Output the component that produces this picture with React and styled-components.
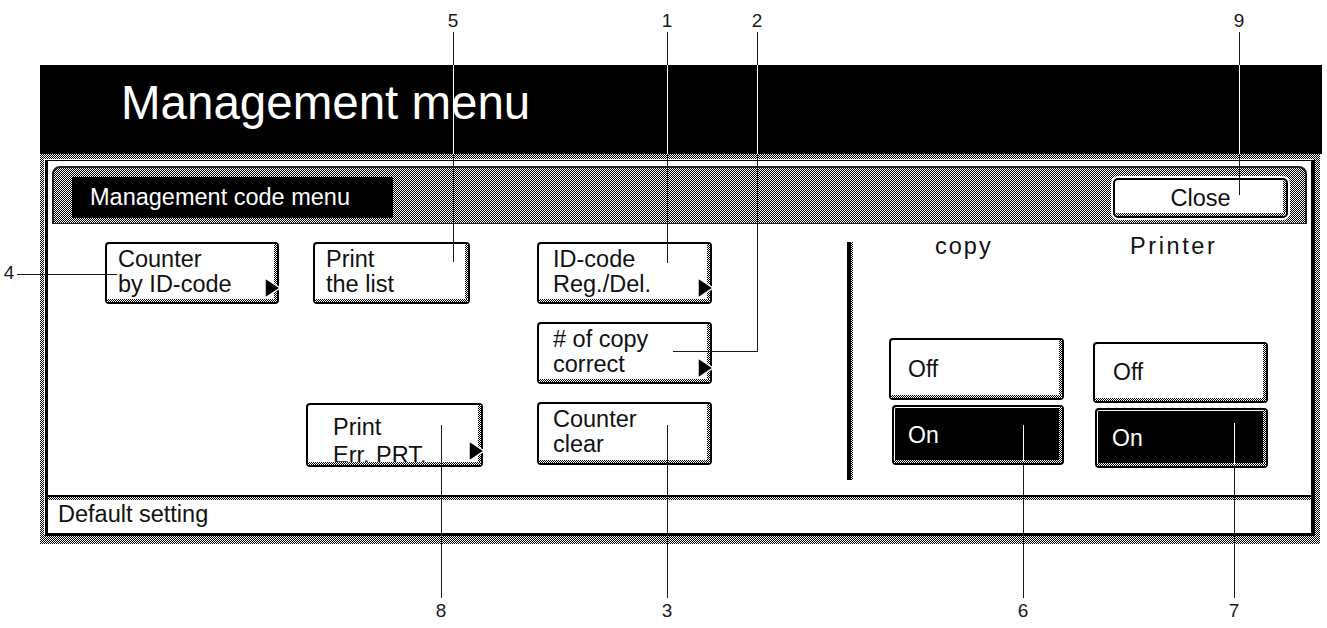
import React from "react";
import styled, { createGlobalStyle, css } from "styled-components";

const GlobalStyle = createGlobalStyle`
  html, body {
    margin: 0;
    padding: 0;
    background: #fff;
  }
  body {
    font-family: "Liberation Sans", Arial, Helvetica, sans-serif;
    color: #111;
  }
`;

// 1px dither, as on the panel's LCD
const checker = css`
  background-color: #fff;
  background-image: repeating-conic-gradient(#000 0 25%, #fff 0 50%);
  background-size: 2px 2px;
`;

const teeth = css`
  &::before {
    content: "";
    position: absolute;
    top: 0;
    right: 0;
    bottom: 0;
    width: 3px;
    ${checker}
  }
  &::after {
    content: "";
    position: absolute;
    left: 0;
    right: 0;
    bottom: 0;
    height: 3px;
    ${checker}
  }
`;

const Page = styled.div`
  position: relative;
  box-sizing: border-box;
  width: 1327px;
  height: 628px;
  overflow: hidden;
  padding: 65px 0 0 40px;
  background: #fff;
`;

const Screen = styled.div`
  width: 1282px;
`;

const Header = styled.div`
  height: 89px;
  box-sizing: border-box;
  padding: 11px 0 0 81px;
  background: #000;
  color: #fff;
  font-size: 47.5px;
  line-height: 53px;
  white-space: nowrap;
`;

const Frame = styled.div`
  width: 1280px;
  box-sizing: border-box;
  padding: 6px 5px 8px 5px;
  ${checker}
`;

const Panel = styled.div`
  background: #fff;
  border-style: solid;
  border-color: #000;
  border-width: 1px 4px 3px 3px;
  box-shadow: -1px -1px 0 #fff;
  display: flex;
  flex-direction: column;
`;

const TitleBar = styled.div`
  height: 58px;
  box-sizing: border-box;
  margin: 5px 4px 0 4px;
  padding: 9px 17px 0 18px;
  border: 2px solid #222;
  border-bottom-width: 1px;
  border-radius: 8px 8px 0 0;
  display: flex;
  align-items: flex-start;
  justify-content: space-between;
  ${checker}
`;

const MenuLabel = styled.div`
  width: 321px;
  height: 41px;
  box-sizing: border-box;
  padding-left: 18px;
  background: #000;
  color: #fff;
  font-size: 23.5px;
  display: flex;
  align-items: center;
`;

const CloseButton = styled.div`
  position: relative;
  width: 175px;
  height: 40px;
  margin-top: 1px;
  box-sizing: border-box;
  border: 2px solid #000;
  border-radius: 5px;
  background: #fff;
  box-shadow: 0 0 0 2px #fff;
  font-size: 23.5px;
  display: flex;
  align-items: center;
  justify-content: center;
  overflow: hidden;
  ${teeth}
`;

const Body = styled.div`
  height: 271px;
  display: flex;
`;

const KeyGrid = styled.div`
  width: 799px;
  box-sizing: border-box;
  padding: 18px 0 0 57px;
  display: grid;
  grid-template-columns: 208px 224px 175px;
  grid-template-rows: repeat(3, 62px);
  row-gap: 18px;
  align-items: start;
`;

const Key = styled.div`
  position: relative;
  grid-column: ${(p) => p.$col};
  grid-row: ${(p) => p.$row};
  width: ${(p) => p.$w}px;
  height: ${(p) => p.$h || 62}px;
  margin-left: ${(p) => p.$shift || 0}px;
  margin-top: ${(p) => p.$drop || 0}px;
  box-sizing: border-box;
  padding: ${(p) => p.$top || 3}px 0 0 ${(p) => p.$pad || 11}px;
  border: 2px solid #000;
  border-radius: 4px;
  background: #fff;
  font-size: 23.5px;
  line-height: ${(p) => p.$lh || 25}px;
  white-space: nowrap;
  ${teeth}
`;

const Arrow = styled.svg`
  position: absolute;
  right: -3px;
  bottom: 4px;
  z-index: 1;
  overflow: visible;
`;

const Divider = styled.div`
  width: 2px;
  height: 238px;
  margin-top: 18px;
  border-left: 4px solid #000;
  ${checker}
`;

const ModeArea = styled.div`
  display: flex;
  gap: 29px;
  padding-left: 36px;
`;

const ModeColumn = styled.div`
  width: 175px;
  display: flex;
  flex-direction: column;
  gap: 5px;
`;

const ModeLabel = styled.div`
  margin: 10px 0 ${(p) => 74 + p.$drop}px ${(p) => p.$pad}px;
  font-size: 23.5px;
  line-height: 25px;
  letter-spacing: ${(p) => p.$spacing}px;
`;

const Toggle = styled.div`
  position: relative;
  box-sizing: border-box;
  width: ${(p) => p.$w}px;
  height: ${(p) => p.$h}px;
  margin-left: ${(p) => p.$x || 0}px;
  padding-left: ${(p) => p.$pad}px;
  border: 2px solid #000;
  border-radius: 4px;
  background: ${(p) => (p.$on ? "#000" : "#fff")};
  color: ${(p) => (p.$on ? "#fff" : "#111")};
  box-shadow: ${(p) => (p.$on ? "inset 0 0 0 1px #fff" : "none")};
  font-size: 23px;
  display: flex;
  align-items: center;
  ${teeth}
`;

const Footer = styled.div`
  position: relative;
  height: 38px;
  box-sizing: border-box;
  padding: 5px 0 0 10px;
  border-top: 2px solid #000;
  font-size: 23.5px;
  line-height: 25px;

  &::before {
    content: "";
    position: absolute;
    left: 0;
    right: 0;
    top: 0;
    height: 3px;
    ${checker}
  }
`;

// leader lines of the manual's callouts, drawn over the screen
const Lead = styled.div`
  position: absolute;
  left: ${(p) => p.$x}px;
  top: ${(p) => p.$y}px;
  width: ${(p) => p.$w || 1}px;
  height: ${(p) => p.$h || 1}px;
  background: ${(p) => (p.$light ? "#fff" : "#1a1a1a")};
`;

const Tag = styled.div`
  position: absolute;
  left: ${(p) => p.$x}px;
  top: ${(p) => p.$y}px;
  transform: translateX(-50%);
  font-size: 19px;
  line-height: 21px;
  color: #1a1a1a;
`;

const keys = [
  { col: 1, row: 1, w: 174, lines: ["Counter", "by ID-code"], arrow: true },
  { col: 2, row: 1, w: 157, lines: ["Print", "the list"] },
  { col: 3, row: 1, w: 175, pad: 14, lines: ["ID-code", "Reg./Del."], arrow: true },
  { col: 3, row: 2, w: 175, pad: 14, lines: ["# of copy", "correct"], arrow: true },
  { col: 2, row: 3, w: 177, h: 64, shift: -7, drop: 1, pad: 25, top: 8, lh: 28, lines: ["Print", "Err. PRT."], arrow: true },
  { col: 3, row: 3, w: 175, h: 63, pad: 14, lines: ["Counter", "clear"] },
];

const modes = [
  {
    name: "copy",
    pad: 46,
    spacing: 2,
    drop: 0,
    off: { w: 175, h: 62, pad: 17 },
    on: { w: 172, h: 60, x: 3, pad: 14 },
  },
  {
    name: "Printer",
    pad: 37,
    spacing: 2.6,
    drop: 4,
    off: { w: 175, h: 61, pad: 18 },
    on: { w: 173, h: 60, x: 2, pad: 15 },
  },
];

// light: stretch of the leader that runs over a black area
const callouts = [
  { n: "5", x: 453, lines: [{ x: 453, y: 32, h: 230 }], light: { y: 65, h: 89 } },
  { n: "1", x: 667, lines: [{ x: 667, y: 32, h: 231 }], light: { y: 65, h: 89 } },
  { n: "2", x: 757, lines: [{ x: 757, y: 32, h: 319 }, { x: 673, y: 351, w: 85 }], light: { y: 65, h: 89 } },
  { n: "9", x: 1239, lines: [{ x: 1239, y: 32, h: 163 }], light: { y: 65, h: 89 } },
  { n: "8", x: 441, bottom: true, lines: [{ x: 441, y: 425, h: 173 }] },
  { n: "3", x: 667, bottom: true, lines: [{ x: 667, y: 425, h: 173 }] },
  { n: "6", x: 1023, bottom: true, lines: [{ x: 1023, y: 425, h: 173 }], light: { y: 425, h: 37 } },
  { n: "7", x: 1234, bottom: true, lines: [{ x: 1234, y: 423, h: 175 }], light: { y: 423, h: 42 } },
];

const ArrowMark = () => (
  <Arrow width="15" height="20" viewBox="0 0 15 20">
    <polygon points="0,0 15,10 0,20" fill="#000" stroke="#fff" strokeWidth="1.5" strokeLinejoin="miter" />
  </Arrow>
);

export default function App() {
  return (
    <>
      <GlobalStyle />
      <Page>
        <Screen>
          <Header>Management menu</Header>
          <Frame>
            <Panel>
              <TitleBar>
                <MenuLabel>Management code menu</MenuLabel>
                <CloseButton>Close</CloseButton>
              </TitleBar>
              <Body>
                <KeyGrid>
                  {keys.map((k) => (
                    <Key
                      key={k.lines.join(" ")}
                      $col={k.col}
                      $row={k.row}
                      $w={k.w}
                      $h={k.h}
                      $shift={k.shift}
                      $drop={k.drop}
                      $pad={k.pad}
                      $top={k.top}
                      $lh={k.lh}
                    >
                      {k.lines[0]}
                      <br />
                      {k.lines[1]}
                      {k.arrow && <ArrowMark />}
                    </Key>
                  ))}
                </KeyGrid>
                <Divider />
                <ModeArea>
                  {modes.map((m) => (
                    <ModeColumn key={m.name}>
                      <ModeLabel $pad={m.pad} $spacing={m.spacing} $drop={m.drop}>
                        {m.name}
                      </ModeLabel>
                      <Toggle $w={m.off.w} $h={m.off.h} $pad={m.off.pad}>
                        Off
                      </Toggle>
                      <Toggle $on $w={m.on.w} $h={m.on.h} $x={m.on.x} $pad={m.on.pad}>
                        On
                      </Toggle>
                    </ModeColumn>
                  ))}
                </ModeArea>
              </Body>
              <Footer>Default setting</Footer>
            </Panel>
          </Frame>
        </Screen>

        {callouts.map((c) => (
          <React.Fragment key={c.n}>
            <Tag $x={c.x} $y={c.bottom ? 600 : 10}>
              {c.n}
            </Tag>
            {c.lines.map((l, i) => (
              <Lead key={i} $x={l.x} $y={l.y} $w={l.w} $h={l.h} />
            ))}
            {c.light && <Lead $light $x={c.x} $y={c.light.y} $h={c.light.h} />}
          </React.Fragment>
        ))}
        <Tag $x={9} $y={262}>
          4
        </Tag>
        <Lead $x={17} $y={274} $w={100} />
      </Page>
    </>
  );
}
